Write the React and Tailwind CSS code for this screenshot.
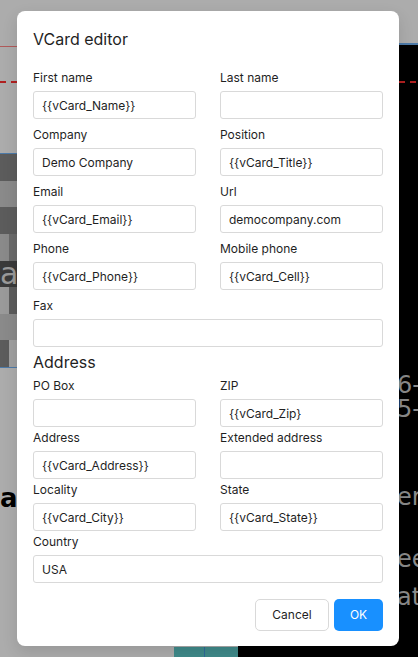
import React from 'react'

/**
 * VCard editor dialog shown over a dimmed page.
 */

// Single labelled input
const Field = ({ label, value = '', wide = false }) => (
  <div className={`flex flex-col ${wide ? 'col-span-2' : ''}`}>
    <label className="h-5 text-[12px] leading-5 text-[#1f1f1f]">{label}</label>
    <input
      readOnly
      value={value}
      className="mt-[3px] h-[28px] w-full rounded-[3px] border border-[#d9d9d9] bg-white px-2 text-[12px] text-[#1f1f1f] outline-none"
    />
  </div>
)

// Dimmed page behind the dialog
const Backdrop = () => (
  <div className="flex h-[657px] w-full flex-col bg-[#acacac] font-['DejaVu_Sans',sans-serif]">
    <div className="h-[43px]" />
    <div className="flex flex-1">
      {/* Left area */}
      <div className="flex w-[238px] flex-col">
        <div className="h-[3px]" />
        <div className="h-px bg-[#b05a5a]" />
        <div className="h-[34px]" />
        <div className="h-[2px] w-[17px] border-t-2 border-dashed border-[#b02020]" />
        <div className="h-[70px]" />
        <div className="h-px bg-[#4d7aa8]" />
        {/* Checker blocks */}
        <div className="grid h-[213px] w-[17px] grid-cols-2 grid-rows-8">
          <div className="bg-[#5c5c5c]" />
          <div className="bg-[#5c5c5c]" />
          <div className="bg-[#8a8a8a]" />
          <div className="bg-[#8a8a8a]" />
          <div className="bg-[#5c5c5c]" />
          <div className="bg-[#5c5c5c]" />
          <div className="bg-[#8a8a8a]" />
          <div className="bg-[#6a6a6a]" />
          <div className="col-span-2 flex items-center bg-[#3a3a3a] text-[30px] leading-none text-[#9a9a9a]">
            a
          </div>
          <div className="bg-[#9a9a9a]" />
          <div className="bg-[#5c5c5c]" />
          <div className="bg-[#8a8a8a]" />
          <div className="bg-[#8a8a8a]" />
          <div className="bg-[#5c5c5c]" />
          <div className="bg-[#a0a0a0]" />
        </div>
        <div className="h-px bg-[#4d7aa8]" />
        <div className="mt-[114px] text-[26px] font-bold leading-8 text-black">ar</div>
        <div className="mt-auto flex h-[10px] pl-[174px]">
          <div className="w-[30px] bg-[#3f8a8a]" />
          <div className="w-px bg-[#2f6a9a]" />
          <div className="w-[33px] bg-[#3f8a8a]" />
        </div>
      </div>
      {/* Right dark area */}
      <div className="flex flex-1 flex-col bg-black">
        <div className="h-[2px] bg-[#4d7aa8]" />
        <div className="h-[36px]" />
        <div className="ml-[161px] h-[2px] border-t-2 border-dashed border-[#b02020]" />
        <div className="flex flex-col pl-[159px] text-[24px] leading-[24px] text-[#8a8a8a]">
          <div className="mt-[290px]">6-</div>
          <div>5-</div>
          <div className="mt-[64px]">er</div>
          <div className="mt-[38px]">ee</div>
          <div className="mt-[14px]">at</div>
        </div>
      </div>
    </div>
  </div>
)

export default function App() {
  return (
    <div className="relative h-[657px] w-[418px] overflow-hidden">
      <Backdrop />

      {/* Dialog */}
      <div className="absolute left-[17px] top-[11px] w-[382px] rounded-lg bg-white px-4 pb-[15px] pt-4 font-['Inter',sans-serif] shadow-[0_6px_16px_rgba(0,0,0,0.12)]">
        <h2 className="text-[16px] leading-6 text-[#1f1f1f]">VCard editor</h2>

        <div className="mt-[17px] grid grid-cols-2 gap-x-6 gap-y-[6px]">
          <Field label="First name" value="{{vCard_Name}}" />
          <Field label="Last name" />
          <Field label="Company" value="Demo Company" />
          <Field label="Position" value="{{vCard_Title}}" />
          <Field label="Email" value="{{vCard_Email}}" />
          <Field label="Url" value="democompany.com" />
          <Field label="Phone" value="{{vCard_Phone}}" />
          <Field label="Mobile phone" value="{{vCard_Cell}}" />
          <Field label="Fax" wide />
        </div>

        <h3 className="mt-[3px] text-[16px] leading-6 text-[#1f1f1f]">Address</h3>

        <div className="mt-[2px] grid grid-cols-2 gap-x-6 gap-y-px">
          <Field label="PO Box" />
          <Field label="ZIP" value="{{vCard_Zip}" />
          <Field label="Address" value="{{vCard_Address}}" />
          <Field label="Extended address" />
          <Field label="Locality" value="{{vCard_City}}" />
          <Field label="State" value="{{vCard_State}}" />
          <Field label="Country" value="USA" wide />
        </div>

        {/* Footer buttons */}
        <div className="mt-4 flex justify-end gap-[5px]">
          <button className="h-8 w-[74px] rounded-[5px] border border-[#d9d9d9] bg-white text-[12px] text-[#1f1f1f]">
            Cancel
          </button>
          <button className="h-8 w-[49px] rounded-[5px] bg-[#1890ff] text-[12px] text-white">
            OK
          </button>
        </div>
      </div>
    </div>
  )
}
